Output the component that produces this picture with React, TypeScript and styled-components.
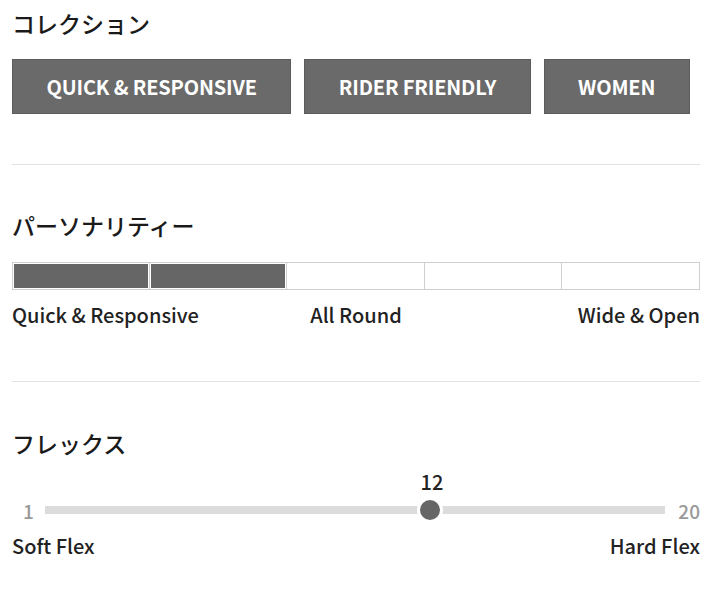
import React from "react";
import styled, { createGlobalStyle } from "styled-components";

const Global = createGlobalStyle`
  html, body { margin: 0; padding: 0; background: #fff; }
  body { font-family: "Noto Sans CJK JP", "Noto Sans", sans-serif; color: #222; }
`;

const Page = styled.div`
  width: 710px;
  box-sizing: border-box;
  padding: 6px 10px 0 12px;
  display: flex;
  flex-direction: column;
`;

const Section = styled.section<{ $gapBelow?: number; $spaceAfter?: number }>`
  display: flex;
  flex-direction: column;
  padding-bottom: ${(p) => (p.$gapBelow ? `${p.$gapBelow}px` : "0")};
  margin-bottom: ${(p) => (p.$spaceAfter ? `${p.$spaceAfter}px` : "0")};
  border-bottom: ${(p) => (p.$gapBelow ? "1.5px solid #e3e3e3" : "none")};
`;

const Heading = styled.h2`
  margin: 0;
  font-size: 23px;
  line-height: 34px;
  font-weight: 500;
  color: #1a1a1a;
`;

const ButtonRow = styled.div`
  display: flex;
  gap: 13px;
  margin-top: 19px;
`;

const Tag = styled.button`
  height: 55px;
  padding: 0 33.5px;
  border: 1px solid #5c5c5c;
  background: #6a6a6a;
  color: #fff;
  font-family: "Noto Sans CJK JP", sans-serif;
  font-size: 20px;
  font-weight: 700;
  letter-spacing: -0.18px;
  cursor: pointer;
`;

const Meter = styled.div`
  display: grid;
  grid-template-columns: repeat(5, 1fr);
  margin-top: 20px;
  height: 28px;
`;

const Segment = styled.div<{ $on: boolean }>`
  border: 1px solid #cfcfcf;
  margin-left: -1px;
  padding: 1px;
  background: #fff;
  &:first-child { margin-left: 0; }
  &::after {
    content: "";
    display: block;
    height: 100%;
    background: ${(p) => (p.$on ? "#666" : "#fff")};
  }
`;

const Labels = styled.div`
  display: grid;
  grid-template-columns: 1fr auto 1fr;
  margin-top: 11px;
`;

const Label = styled.span<{ $align: "left" | "center" | "right" }>`
  font-size: 20px;
  line-height: 28px;
  font-weight: 500;
  color: #222;
  text-align: ${(p) => p.$align};
`;

const SliderRow = styled.div`
  display: flex;
  align-items: center;
  margin-top: 37px;
  height: 26px;
`;

const EndValue = styled.span<{ $side: "left" | "right" }>`
  width: ${(p) => (p.$side === "left" ? "33px" : "35px")};
  text-align: ${(p) => (p.$side === "left" ? "center" : "right")};
  font-size: 19px;
  color: #999;
  font-weight: 500;
`;

const Track = styled.div`
  position: relative;
  flex: 1;
  height: 8px;
  background: #dcdcdc;
`;

const Thumb = styled.div`
  position: absolute;
  top: 50%;
  width: 20px;
  height: 20px;
  border-radius: 50%;
  background: #666;
  border: 3px solid #fff;
  transform: translate(-50%, -50%);
`;

const ValueText = styled.div`
  position: absolute;
  bottom: calc(100% + 12px);
  transform: translateX(-50%);
  font-size: 20px;
  line-height: 24px;
  font-weight: 500;
  color: #222;
  white-space: nowrap;
`;

const FlexLabels = styled.div`
  display: flex;
  justify-content: space-between;
  margin-top: 9px;
`;

const tags = ["QUICK & RESPONSIVE", "RIDER FRIENDLY", "WOMEN"];
const level = 2;

export default function App() {
  const min = 1;
  const max = 20;
  const value = 12;
  const pct = 62.1;
  return (
    <Page>
      <Global />
      <Section $gapBelow={50} $spaceAfter={43}>
        <Heading>コレクション</Heading>
        <ButtonRow>
          {tags.map((t) => (
            <Tag key={t}>{t}</Tag>
          ))}
        </ButtonRow>
      </Section>
      <Section $gapBelow={52} $spaceAfter={44}>
        <Heading>パーソナリティー</Heading>
        <Meter>
          {[0, 1, 2, 3, 4].map((i) => (
            <Segment key={i} $on={i < level} />
          ))}
        </Meter>
        <Labels>
          <Label $align="left">Quick &amp; Responsive</Label>
          <Label $align="center">All Round</Label>
          <Label $align="right">Wide &amp; Open</Label>
        </Labels>
      </Section>
      <Section>
        <Heading>フレックス</Heading>
        <SliderRow>
          <EndValue $side="left">{min}</EndValue>
          <Track>
            <ValueText style={{ left: `calc(${pct}% + 2px)` }}>{value}</ValueText>
            <Thumb style={{ left: `${pct}%` }} />
          </Track>
          <EndValue $side="right">{max}</EndValue>
        </SliderRow>
        <FlexLabels>
          <Label $align="left">Soft Flex</Label>
          <Label $align="right">Hard Flex</Label>
        </FlexLabels>
      </Section>
    </Page>
  );
}
